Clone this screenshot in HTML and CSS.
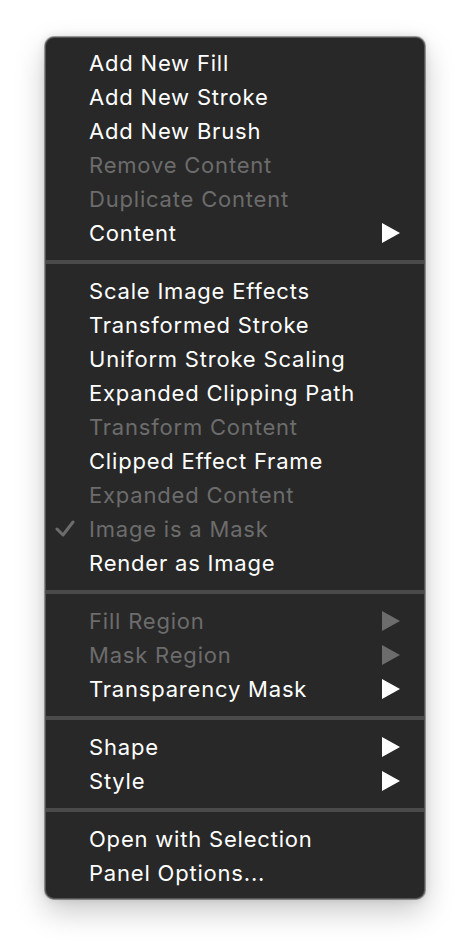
FILE: index.html
```html
<!DOCTYPE html>
<html>
<head>
<meta charset="utf-8">
<link rel="stylesheet" href="styles.css">
</head>
<body>
<div class="menu">
  <div class="section">
    <div class="item">Add New Fill</div>
    <div class="item">Add New Stroke</div>
    <div class="item">Add New Brush</div>
    <div class="item disabled">Remove Content</div>
    <div class="item disabled">Duplicate Content</div>
    <div class="item sub">Content<svg class="arrow" viewBox="0 0 18 20"><polygon points="0,0 18,10 0,20"/></svg></div>
  </div>
  <div class="sep"></div>
  <div class="section">
    <div class="item">Scale Image Effects</div>
    <div class="item">Transformed Stroke</div>
    <div class="item">Uniform Stroke Scaling</div>
    <div class="item">Expanded Clipping Path</div>
    <div class="item disabled">Transform Content</div>
    <div class="item">Clipped Effect Frame</div>
    <div class="item disabled">Expanded Content</div>
    <div class="item disabled"><svg class="check" viewBox="0 0 20 18"><polyline points="2,9 8,15 18,2"/></svg>Image is a Mask</div>
    <div class="item">Render as Image</div>
  </div>
  <div class="sep"></div>
  <div class="section">
    <div class="item disabled sub">Fill Region<svg class="arrow" viewBox="0 0 18 20"><polygon points="0,0 18,10 0,20"/></svg></div>
    <div class="item disabled sub">Mask Region<svg class="arrow" viewBox="0 0 18 20"><polygon points="0,0 18,10 0,20"/></svg></div>
    <div class="item sub">Transparency Mask<svg class="arrow" viewBox="0 0 18 20"><polygon points="0,0 18,10 0,20"/></svg></div>
  </div>
  <div class="sep"></div>
  <div class="section">
    <div class="item sub">Shape<svg class="arrow" viewBox="0 0 18 20"><polygon points="0,0 18,10 0,20"/></svg></div>
    <div class="item sub">Style<svg class="arrow" viewBox="0 0 18 20"><polygon points="0,0 18,10 0,20"/></svg></div>
  </div>
  <div class="sep"></div>
  <div class="section">
    <div class="item">Open with Selection</div>
    <div class="item">Panel Options...</div>
  </div>
</div>
</body>
</html>
```
FILE: styles.css
```css
html, body {
  margin: 0;
  padding: 0;
  background: #ffffff;
}
body {
  width: 470px;
  height: 952px;
  padding-top: 37px;
  padding-left: 45px;
  box-sizing: border-box;
  font-family: Inter, "Noto Sans", sans-serif;
}
.menu {
  width: 380px;
  box-sizing: border-box;
  background: #282828;
  border: 1px solid #555555;
  border-radius: 9px;
  box-shadow: 0 0 0 1px rgba(0,0,0,0.35), 0 12px 30px rgba(0,0,0,0.22), 0 0 8px rgba(0,0,0,0.12);
  padding: 8px 0;
}
.section {
  display: flex;
  flex-direction: column;
}
.item {
  position: relative;
  height: 34px;
  display: flex;
  align-items: center;
  padding-left: 43px;
  padding-right: 24px;
  color: #ffffff;
  font-size: 22px;
  font-weight: 400;
  letter-spacing: 0.8px;
}
.item.disabled {
  color: #6c6c6c;
}
.sep {
  height: 4px;
  background: #4a4a4a;
  margin: 10px 0;
}
.arrow {
  position: absolute;
  right: 24px;
  top: 7px;
  width: 18px;
  height: 20px;
  fill: #ffffff;
}
.disabled .arrow {
  fill: #6c6c6c;
}
.check {
  position: absolute;
  left: 9px;
  top: 8px;
  width: 20px;
  height: 18px;
  fill: none;
  stroke: #6c6c6c;
  stroke-width: 3;
  stroke-linecap: round;
  stroke-linejoin: round;
}
```
